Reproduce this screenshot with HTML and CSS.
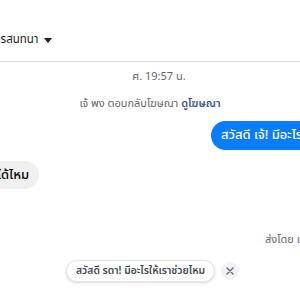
FILE: index.html
```html
<!DOCTYPE html>
<html lang="th">
<head>
<meta charset="utf-8">
<link rel="stylesheet" href="styles.css">
</head>
<body>
<div class="page">
  <header class="header">
    <span class="header-title">การสนทนา</span>
    <span class="caret"></span>
  </header>
  <main class="thread">
    <div class="time">ศ. 19:57 น.</div>
    <div class="reply-note">เจ้ พง ตอบกลับโฆษณา <a class="ad-link">ดูโฆษณา</a></div>
    <div class="row-out">
      <div class="bubble-out">สวัสดี เจ้! มีอะไรให้เราช่วยไหม</div>
    </div>
    <div class="row-in">
      <div class="bubble-in">มีอะไรให้เราช่วยได้ไหม</div>
    </div>
    <div class="sent-by">ส่งโดย เจ้ พง</div>
    <div class="suggest-row">
      <button class="chip">สวัสดี รดา! มีอะไรให้เราช่วยไหม</button>
      <button class="close" aria-label="close">
        <svg width="8" height="8" viewBox="0 0 8 8"><path d="M1 1L7 7M7 1L1 7" stroke="#65676b" stroke-width="1.4" stroke-linecap="round"/></svg>
      </button>
    </div>
  </main>
</div>
</body>
</html>
```
FILE: styles.css
```css
html, body {
  margin: 0;
  padding: 0;
  background: #fff;
}
.page {
  width: 300px;
  height: 300px;
  overflow: hidden;
  font-family: "Noto Sans Thai", "Noto Sans", "DejaVu Sans", sans-serif;
  color: #050505;
}
.header {
  height: 62px;
  box-sizing: border-box;
  padding-top: 32px;
  border-bottom: 1px solid #dadde1;
  display: flex;
  align-items: flex-start;
  gap: 5px;
}
.header-title {
  margin-left: -11px;
  font-size: 11.5px;
  line-height: 16px;
  color: #1c1e21;
}
.caret {
  margin-top: 6px;
  width: 0;
  height: 0;
  border-left: 4px solid transparent;
  border-right: 4px solid transparent;
  border-top: 5px solid #1c1e21;
}
.thread {
  display: flex;
  flex-direction: column;
}
.time {
  margin-top: 8px;
  padding-left: 18px;
  text-align: center;
  font-size: 11px;
  line-height: 14px;
  color: #65676b;
}
.reply-note {
  margin-top: 13px;
  text-align: center;
  font-size: 11px;
  line-height: 14px;
  color: #65676b;
  white-space: nowrap;
}
.ad-link {
  color: #385898;
  font-weight: 600;
}
.row-out {
  margin-top: 10px;
  padding-left: 211px;
  display: flex;
}
.bubble-out {
  flex: none;
  height: 29px;
  line-height: 29px;
  padding: 0 10px;
  border-radius: 15px;
  background: #0a7cff;
  color: #fff;
  font-size: 13px;
  font-weight: 500;
  white-space: nowrap;
}
.row-in {
  margin-top: 11px;
  width: 39px;
  display: flex;
  justify-content: flex-end;
}
.bubble-in {
  flex: none;
  height: 28px;
  line-height: 28px;
  padding: 0 10px;
  border-radius: 14px;
  background: #f0f0f0;
  color: #050505;
  font-size: 13px;
  font-weight: 500;
  white-space: nowrap;
}
.sent-by {
  margin-top: 44px;
  padding-left: 265px;
  font-size: 11px;
  line-height: 14px;
  color: #65676b;
  white-space: nowrap;
}
.suggest-row {
  margin-top: 13px;
  display: flex;
  justify-content: center;
  align-items: center;
  gap: 6px;
  padding-left: 5px;
}
.chip {
  height: 22px;
  padding: 0 9px;
  border: 1px solid #e4e6eb;
  border-radius: 11px;
  background: #fff;
  box-shadow: 0 1px 3px rgba(0, 0, 0, 0.15);
  font-family: inherit;
  font-size: 10.3px;
  font-weight: 600;
  color: #444950;
  white-space: nowrap;
  display: flex;
  align-items: center;
}
.close {
  width: 18px;
  height: 18px;
  padding: 0;
  border: none;
  border-radius: 50%;
  background: #f0f2f5;
  display: flex;
  align-items: center;
  justify-content: center;
}
```
